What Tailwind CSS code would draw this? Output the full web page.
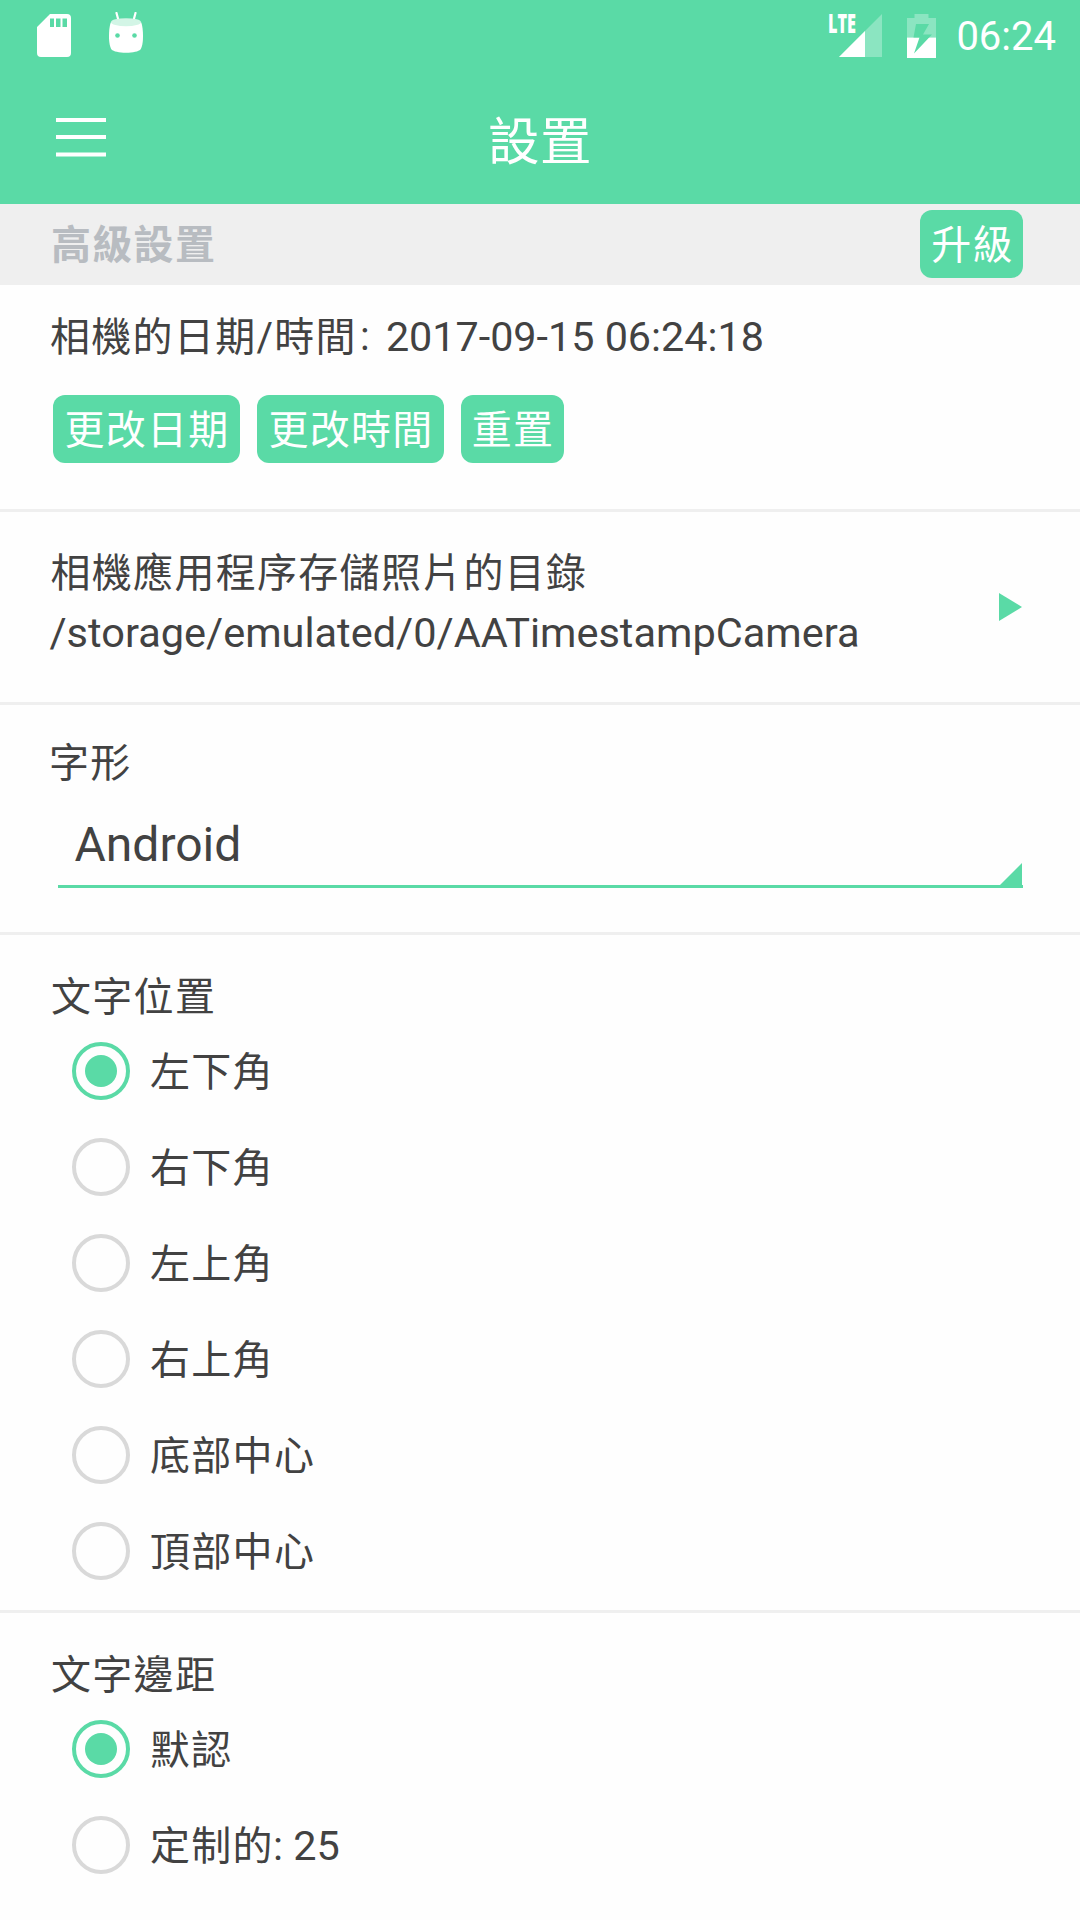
<!DOCTYPE html>
<html lang="zh-Hant">
<head>
    <meta charset="UTF-8">
    <meta name="viewport" content="width=device-width, initial-scale=1.0">
    <title>設置</title>
    <script src="https://cdn.jsdelivr.net/npm/@tailwindcss/browser@4"></script>
</head>
<body class="h-[1920px] overflow-hidden bg-[#fefefe] font-['Roboto','Noto_Sans_CJK_TC',sans-serif] text-[40px] leading-[60px] tracking-[1.3px] text-[#424242]">
    <header class="h-[204px] bg-[#5adaa6] text-white">
        <!-- Status bar -->
        <div class="flex h-[72px] items-start justify-between pl-[37px] pr-6">
            <div class="flex items-start gap-[38px]">
                <svg class="mt-3.5 h-[43px] w-[34px]" viewBox="0 0 34 43" fill="currentColor">
                    <path fill-rule="evenodd" d="M13 0H30Q34 0 34 4V39Q34 43 30 43H4Q0 43 0 39V13ZM13 4.500V13H17V4.500ZM19 4.500V13H23.500V4.500ZM25.500 4.500V13H30V4.500Z" />
                </svg>
                <svg class="mt-3 h-[42px] w-[34px]" viewBox="0 0 34 42" fill="currentColor">
                    <path d="M7.500 1L9.500 8.500M26.500 1L24.500 8.500" stroke="currentColor" stroke-width="2.200" stroke-linecap="round" />
                    <path d="M2 10C1 12 0 17 0 24C0 31 1 35 2.500 37.500C4.500 39.500 10 40.700 17 40.700C24 40.700 29.500 39.500 31.500 37.500C33 35 34 31 34 24C34 17 33 12 32 10Z" />
                    <ellipse cx="17" cy="10.200" rx="15" ry="4" fill="#d3f5e6" />
                    <circle cx="8.500" cy="23.500" r="2.300" fill="#5adaa6" />
                    <circle cx="25.500" cy="23.500" r="2.300" fill="#5adaa6" />
                </svg>
            </div>
            <div class="flex items-start">
                <svg class="mt-3.5 h-[43px] w-[53px] overflow-visible" viewBox="0 0 53 43" fill="currentColor">
                    <path d="M53 0V43H10Z" opacity=".3" />
                    <path d="M36 17V43H10Z" />
                    <text x="-1" y="19" font-family="'Open Sans', sans-serif" font-size="26" font-weight="800" letter-spacing="0" textLength="28" lengthAdjust="spacingAndGlyphs">LTE</text>
                </svg>
                <svg class="ml-[25px] mt-[13px] h-[45px] w-[29px]" viewBox="0 0 29 45" fill="currentColor">
                    <path d="M7.500 1H21.500V5H29V24.500H0V5H7.500Z" opacity=".3" />
                    <path d="M0 24.500H29V45H0Z" />
                    <path d="M9 11H22L16 21.500H25L7 40.500L12.500 24.500H6.500Z" fill="#5adaa6" />
                </svg>
                <span class="ml-5 mt-[7px] w-[100px] whitespace-nowrap text-right text-[40px] leading-[60px] tracking-normal">06:24</span>
            </div>
        </div>
        <!-- Title bar -->
        <div class="relative flex h-[132px] items-center justify-center pt-[9px]">
            <svg class="absolute left-14 top-[46px] h-[39px] w-[50px]" viewBox="0 0 50 39" fill="currentColor">
                <path d="M0 0H50V4H0ZM0 17H50V21H0ZM0 34.500H50V38.500H0Z" />
            </svg>
            <h1 class="text-[51.500px] tracking-[0.500px]">設置</h1>
        </div>
    </header>

    <div class="flex h-[81px] items-center justify-between bg-[#efefef] pb-px pl-[51px] pr-[57px]">
        <h2 class="pt-1 font-bold text-[#b8bcc1]">高級設置</h2>
        <button class="h-[68px] w-[103px] rounded-xl bg-[#5adaa6] pl-0.5 pt-[3px] text-white">升級</button>
    </div>

    <main>
        <!-- Date and time -->
        <section class="h-[227px] border-b-3 border-[#efefef] pl-[50px] pt-[22px]">
            <p class="flex"><span class="pt-px">相機的日期/時間</span><span class="w-[29px] pl-[3px]">:</span><span class="text-[41.300px] tracking-normal">2017-09-15 06:24:18</span></p>
            <div class="mt-[27px] flex gap-[17px] pl-[2.500px] text-white">
                <button class="h-[68px] w-[187px] rounded-xl bg-[#5adaa6] pl-0.5 pt-[3px]">更改日期</button>
                <button class="h-[68px] w-[187px] rounded-xl bg-[#5adaa6] pl-0.5 pt-[3px]">更改時間</button>
                <button class="h-[68px] w-[103px] rounded-xl bg-[#5adaa6] pl-0.5 pt-[3px]">重置</button>
            </div>
        </section>

        <!-- Storage folder -->
        <section class="flex h-[193px] items-start justify-between border-b-3 border-[#efefef] pl-[50.500px] pr-[58px] pt-8">
            <div>
                <p>相機應用程序存儲照片的目錄</p>
                <p class="-mt-px -ml-px text-[41.500px] tracking-normal">/storage/emulated/0/AATimestampCamera</p>
            </div>
            <svg class="mt-[49px] h-7 w-[23px] fill-[#5adaa6]" viewBox="0 0 23 28"><path d="M0 0L23 14L0 28Z" /></svg>
        </section>

        <!-- Font -->
        <section class="h-[230px] border-b-3 border-[#efefef] pl-[50px] pr-[57px] pt-[29px]">
            <p class="-ml-px">字形</p>
            <div class="ml-[7.500px] mt-[18px] flex h-[76px] items-end justify-between border-b-3 border-[#5adaa6] pl-[17px]">
                <span class="pb-[10px] text-[48px] tracking-normal">Android</span>
                <svg class="h-[22px] w-[23px] fill-[#5adaa6]" viewBox="0 0 23 22"><path d="M22 0V22H0Z" /></svg>
            </div>
        </section>

        <!-- Text position -->
        <section class="h-[678px] border-b-3 border-[#efefef] pl-[51px] pt-[33px]">
            <p class="mb-[-5px]">文字位置</p>
            <label class="flex h-24 items-center gap-5 pl-[21px]">
                <span class="flex size-[58px] items-center justify-center rounded-full border-4 border-[#5adaa6]"><i class="size-8 rounded-full bg-[#5adaa6]"></i></span><span class="pt-[3px]">左下角</span>
            </label>
            <label class="flex h-24 items-center gap-5 pl-[21px]">
                <span class="size-[58px] rounded-full border-4 border-[#d9d9d9]"></span><span class="pt-[3px]">右下角</span>
            </label>
            <label class="flex h-24 items-center gap-5 pl-[21px]">
                <span class="size-[58px] rounded-full border-4 border-[#d9d9d9]"></span><span class="pt-[3px]">左上角</span>
            </label>
            <label class="flex h-24 items-center gap-5 pl-[21px]">
                <span class="size-[58px] rounded-full border-4 border-[#d9d9d9]"></span><span class="pt-[3px]">右上角</span>
            </label>
            <label class="flex h-24 items-center gap-5 pl-[21px]">
                <span class="size-[58px] rounded-full border-4 border-[#d9d9d9]"></span><span class="pt-[3px]">底部中心</span>
            </label>
            <label class="flex h-24 items-center gap-5 pl-[21px]">
                <span class="size-[58px] rounded-full border-4 border-[#d9d9d9]"></span><span class="pt-[3px]">頂部中心</span>
            </label>
        </section>

        <!-- Text margin -->
        <section class="pl-[51px] pt-[33px]">
            <p class="mb-[-5px]">文字邊距</p>
            <label class="flex h-24 items-center gap-5 pl-[21px]">
                <span class="flex size-[58px] items-center justify-center rounded-full border-4 border-[#5adaa6]"><i class="size-8 rounded-full bg-[#5adaa6]"></i></span><span class="pt-[3px]">默認</span>
            </label>
            <label class="flex h-24 items-center gap-5 pl-[21px]">
                <span class="size-[58px] rounded-full border-4 border-[#d9d9d9]"></span><span class="pt-0.5">定制的<span class="-ml-px text-[41.400px] tracking-normal">: 25</span></span>
            </label>
        </section>
    </main>
</body>
</html>
